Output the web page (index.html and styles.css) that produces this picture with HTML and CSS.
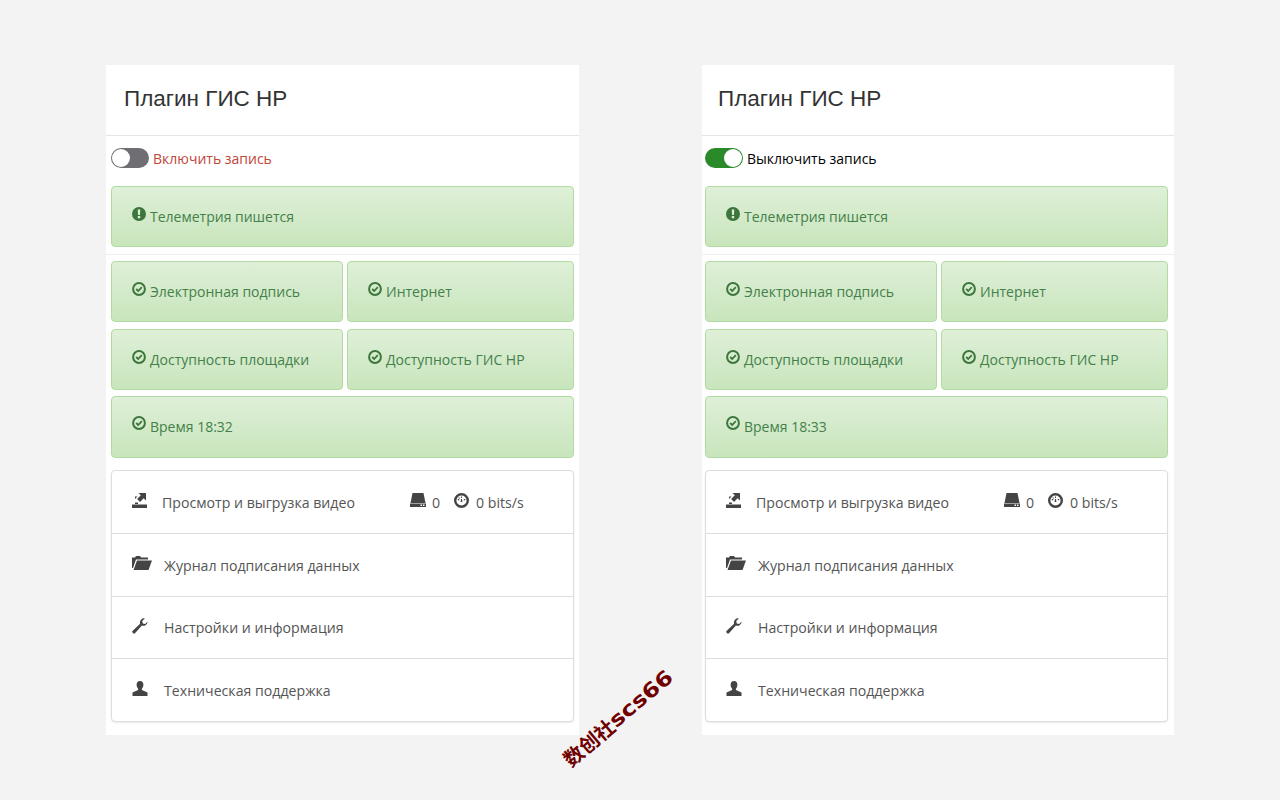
FILE: index.html
```html
<!DOCTYPE html>
<html lang="en">
<head>
    <meta charset="UTF-8">
    <meta name="viewport" content="width=device-width, initial-scale=1.0">
    <title>Плагин ГИС НР</title>
    <link rel="stylesheet" href="styles.css">
</head>
<body>
    <svg class="sprites" width="0" height="0">
        <symbol id="i-check" viewBox="0 0 14 14">
            <circle cx="7" cy="7" r="5.9" fill="none" stroke="currentColor" stroke-width="2"/>
            <path d="M4.2 7l2 2 3.6-3.8" fill="none" stroke="currentColor" stroke-width="1.8"/>
        </symbol>
        <symbol id="i-warn" viewBox="0 0 14 14">
            <circle cx="7" cy="7" r="7" fill="currentColor"/>
            <path d="M5.7 2.6h2.6l-.4 5.4H6.1zM5.8 9h2.4v2.3H5.8z" fill="#e2f0da"/>
        </symbol>
        <symbol id="i-export" viewBox="0 0 15 15">
            <path d="M6.500 0H14v7.500l-2.300-2.300-3.700 3.700-2.900-2.900L8.800 2.300zM3 3.500h2.500L3 6v3.500h3V11H3zM0 11.500h15V15H0z" fill="currentColor"/>
        </symbol>
        <symbol id="i-folder" viewBox="0 0 20 14">
            <path d="M0 1.500h3L4 0h4l1 1.500h7v2H4L1 12H0z" fill="currentColor"/>
            <path d="M5 4.500h15L16.500 14H1.500z" fill="currentColor"/>
        </symbol>
        <symbol id="i-wrench" viewBox="0 0 15 15">
            <path d="M14.600 3.200a4 4 0 0 1-5.300 3.900L3 14a1.500 1.500 0 0 1-2.300-2.100L7.600 5.500A4 4 0 0 1 12 .4L9.600 2.800l.5 2.300 2.300.5z" fill="currentColor"/>
        </symbol>
        <symbol id="i-user" viewBox="0 0 16 15">
            <path d="M8 0c2.200 0 3.400 1.700 3.400 3.800 0 1.500-.6 3-1.500 3.900v1.200L15.500 11.500V15H.5v-3.500L6.100 8.900V7.700c-.9-.9-1.500-2.400-1.500-3.900C4.600 1.700 5.800 0 8 0z" fill="currentColor"/>
        </symbol>
        <symbol id="i-hdd" viewBox="0 0 16 14">
            <path d="M2.500 0h11l2 10H.5z" fill="currentColor"/>
            <path d="M0 10.500h16V14H0zM10.500 11.500v1.500H12v-1.500zM13 11.500v1.500h1.500v-1.500z" fill="currentColor" fill-rule="evenodd"/>
        </symbol>
        <symbol id="i-gauge" viewBox="0 0 15 15">
            <circle cx="7.500" cy="7.500" r="6.300" fill="none" stroke="currentColor" stroke-width="2.400"/>
            <path d="M7 3.500h1v1.500H7zM3.800 6h1.400v1.200H3.800zM9.800 6h1.400v1.200H9.800zM5 4.300l1 .8-.6.700-1-.8zM7 6l1 0 .4 3H6.600z" fill="currentColor"/>
        </symbol>
    </svg>

    <div class="page">
        <section class="panel">
            <h1 class="panel-title">Плагин ГИС НР</h1>
            <div class="record-row">
                <span class="switch"><span class="knob"></span></span>
                <span class="record-label off">Включить запись</span>
            </div>
            <div class="status-top">
                <div class="status"><svg class="icon"><use href="#i-warn"/></svg>Телеметрия пишется</div>
            </div>
            <div class="status-grid">
                <div class="status"><svg class="icon"><use href="#i-check"/></svg>Электронная подпись</div>
                <div class="status"><svg class="icon"><use href="#i-check"/></svg>Интернет</div>
                <div class="status"><svg class="icon"><use href="#i-check"/></svg>Доступность площадки</div>
                <div class="status"><svg class="icon"><use href="#i-check"/></svg>Доступность ГИС НР</div>
                <div class="status wide"><svg class="icon"><use href="#i-check"/></svg>Время 18:32</div>
            </div>
            <ul class="menu">
                <li class="menu-item">
                    <svg class="menu-icon export"><use href="#i-export"/></svg>
                    <span class="menu-text video">Просмотр и выгрузка видео</span>
                    <span class="stats">
                        <svg class="stat-icon"><use href="#i-hdd"/></svg><span class="stat-value">0</span>
                        <svg class="stat-icon gauge"><use href="#i-gauge"/></svg><span>0 bits/s</span>
                    </span>
                </li>
                <li class="menu-item">
                    <svg class="menu-icon folder"><use href="#i-folder"/></svg>
                    <span class="menu-text">Журнал подписания данных</span>
                </li>
                <li class="menu-item">
                    <svg class="menu-icon wrench"><use href="#i-wrench"/></svg>
                    <span class="menu-text">Настройки и информация</span>
                </li>
                <li class="menu-item">
                    <svg class="menu-icon user"><use href="#i-user"/></svg>
                    <span class="menu-text">Техническая поддержка</span>
                </li>
            </ul>
        </section>

        <section class="panel second">
            <h1 class="panel-title">Плагин ГИС НР</h1>
            <div class="record-row">
                <span class="switch on"><span class="knob"></span></span>
                <span class="record-label">Выключить запись</span>
            </div>
            <div class="status-top">
                <div class="status"><svg class="icon"><use href="#i-warn"/></svg>Телеметрия пишется</div>
            </div>
            <div class="status-grid">
                <div class="status"><svg class="icon"><use href="#i-check"/></svg>Электронная подпись</div>
                <div class="status"><svg class="icon"><use href="#i-check"/></svg>Интернет</div>
                <div class="status"><svg class="icon"><use href="#i-check"/></svg>Доступность площадки</div>
                <div class="status"><svg class="icon"><use href="#i-check"/></svg>Доступность ГИС НР</div>
                <div class="status wide"><svg class="icon"><use href="#i-check"/></svg>Время 18:33</div>
            </div>
            <ul class="menu">
                <li class="menu-item">
                    <svg class="menu-icon export"><use href="#i-export"/></svg>
                    <span class="menu-text video">Просмотр и выгрузка видео</span>
                    <span class="stats">
                        <svg class="stat-icon"><use href="#i-hdd"/></svg><span class="stat-value">0</span>
                        <svg class="stat-icon gauge"><use href="#i-gauge"/></svg><span>0 bits/s</span>
                    </span>
                </li>
                <li class="menu-item">
                    <svg class="menu-icon folder"><use href="#i-folder"/></svg>
                    <span class="menu-text">Журнал подписания данных</span>
                </li>
                <li class="menu-item">
                    <svg class="menu-icon wrench"><use href="#i-wrench"/></svg>
                    <span class="menu-text">Настройки и информация</span>
                </li>
                <li class="menu-item">
                    <svg class="menu-icon user"><use href="#i-user"/></svg>
                    <span class="menu-text">Техническая поддержка</span>
                </li>
            </ul>
        </section>
    </div>

    <div class="watermark">数创社<span class="watermark-latin">scs66</span></div>
</body>
</html>
```

FILE: styles.css
```css
/* Global Styles */
body {
    margin: 0;
    background: #f3f3f3;
    font-family: 'Open Sans', sans-serif;
    font-size: 14px;
    color: #555;
}

.sprites {
    position: absolute;
}

.page {
    display: flex;
    gap: 123px;
    padding: 65px 0 0 106px;
}

.panel {
    width: 473px;
    height: 670px;
    background: #fff;
    box-sizing: border-box;
}

.panel.second {
    width: 472px;
}

.panel-title {
    margin: 0;
    height: 71px;
    box-sizing: border-box;
    padding: 0 18px;
    border-bottom: 1px solid #e5e5e5;
    font-family: 'Liberation Sans', sans-serif;
    font-size: 22.500px;
    font-weight: 400;
    line-height: 67px;
    color: #333;
}

.second .panel-title {
    padding-left: 16px;
}

/* Record toggle */
.record-row {
    display: flex;
    align-items: center;
    gap: 4px;
    height: 50px;
    padding-left: 5px;
    padding-bottom: 6px;
    box-sizing: border-box;
    color: #000;
}

.second .record-row {
    padding-left: 3px;
}

.record-label.off {
    color: #c0453a;
}

.switch {
    display: block;
    position: relative;
    width: 38px;
    height: 20px;
    border-radius: 10px;
    background: #6f6e73;
}

.switch.on {
    background: #2a8a2a;
}

.knob {
    position: absolute;
    left: 1px;
    top: 1px;
    width: 18px;
    height: 18px;
    border-radius: 50%;
    background: #fff;
}

.switch.on .knob {
    left: 19px;
}

/* Status boxes */
.status-top {
    padding: 0 5px 7px;
    border-bottom: 1px solid #eee;
}

.second .status-top {
    padding: 0 6px 7px 3px;
}

.status {
    box-sizing: border-box;
    height: 61px;
    padding: 0 19px 0 20px;
    display: flex;
    align-items: center;
    border: 1px solid #b2dba1;
    border-radius: 4px;
    background: linear-gradient(to bottom, #dff0d8, #c8e5bc);
    color: #44804a;
}

.icon {
    width: 14px;
    height: 14px;
    margin-right: 4px;
    position: relative;
    top: -3px;
    flex: none;
    color: #3c763d;
}

.status-grid {
    display: grid;
    grid-template-columns: 232px 227px;
    column-gap: 4px;
    row-gap: 7px;
    padding: 6px 5px 0;
}

.second .status-grid {
    padding: 6px 6px 0 3px;
}

.status.wide {
    grid-column: 1 / 3;
    height: 62px;
    margin-top: -1px;
    padding-bottom: 2px;
}

/* Menu */
.menu {
    list-style: none;
    margin: 12px 5px 0;
    padding: 0;
    background: #fff;
    border: 1px solid #ddd;
    border-radius: 4px;
    box-shadow: 0 1px 2px rgba(0, 0, 0, 0.075);
}

.second .menu {
    margin: 12px 6px 0 3px;
}

.menu-item {
    display: flex;
    align-items: center;
    height: 63px;
    box-sizing: border-box;
    padding-left: 20px;
    border-bottom: 1px solid #ddd;
    font-size: 14.150px;
}

.menu-item:nth-child(3) {
    height: 62px;
}

.menu-item:last-child {
    height: 62px;
    border-bottom: none;
}

.menu-icon {
    flex: none;
    color: #444;
    position: relative;
    top: -2px;
}

.menu-icon.export {
    width: 15px;
    height: 15px;
    margin-right: 15px;
}

.menu-icon.folder {
    width: 20px;
    height: 14px;
    margin-right: 12px;
}

.menu-icon.wrench {
    width: 16px;
    height: 16px;
    margin-right: 16px;
}

.menu-icon.user {
    width: 16px;
    height: 15px;
    margin-right: 16px;
}

.menu-text.video {
    width: 248px;
}

.stats {
    display: flex;
    align-items: center;
}

.stat-icon {
    width: 16px;
    height: 14px;
    color: #444;
    margin-right: 6px;
    position: relative;
    top: -2px;
}

.stat-icon.gauge {
    width: 15px;
    height: 15px;
    margin-right: 7px;
}

.stat-value {
    margin-right: 14px;
}

/* Watermark */
.watermark {
    position: absolute;
    left: 541px;
    top: 703px;
    width: 154px;
    text-align: center;
    transform: rotate(-40deg);
    font-family: 'Noto Sans CJK SC', sans-serif;
    font-size: 20px;
    font-weight: 700;
    line-height: 30px;
    white-space: nowrap;
    color: #700000;
}

.watermark-latin {
    display: inline-block;
    transform: scaleY(0.85);
    font-family: 'DejaVu Sans', sans-serif;
    font-size: 24px;
    font-weight: 700;
}
```
